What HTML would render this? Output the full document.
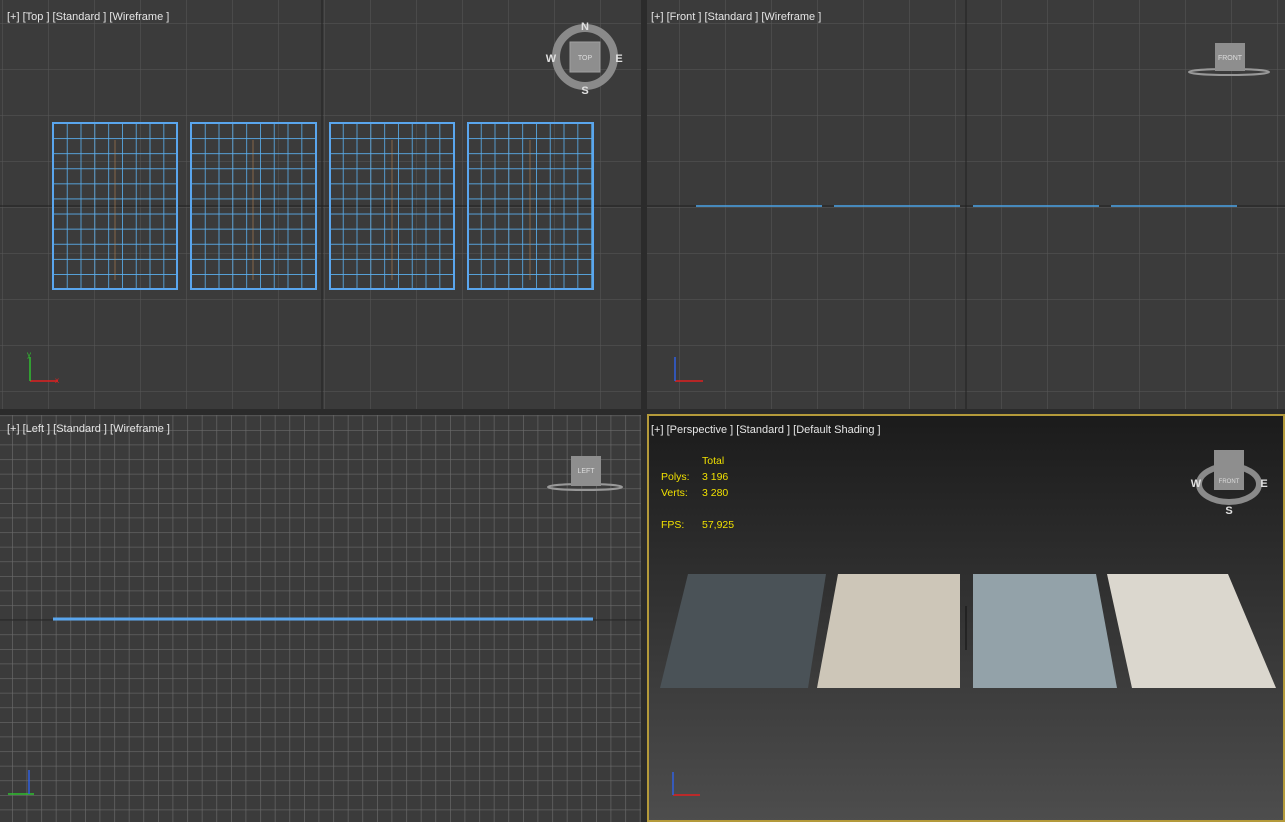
<!DOCTYPE html>
<html><head><meta charset="utf-8"><style>
html,body{margin:0;padding:0;width:1285px;height:822px;overflow:hidden;background:#2b2b2b}
svg{display:block}
text{font-family:"Liberation Sans",sans-serif}
</style></head><body>
<svg width="1285" height="822" viewBox="0 0 1285 822" xmlns="http://www.w3.org/2000/svg">
<defs>
<pattern id="g46" x="2" y="23" width="46" height="46" patternUnits="userSpaceOnUse">
<path d="M0 0H46M0 0V46" stroke="#585858" stroke-width="1" fill="none"/></pattern>
<pattern id="g46b" x="-11" y="23" width="46" height="46" patternUnits="userSpaceOnUse">
<path d="M0 0H46M0 0V46" stroke="#585858" stroke-width="1" fill="none"/></pattern>
<pattern id="g14" x="12" y="430" width="14.6" height="14.6" patternUnits="userSpaceOnUse">
<path d="M0 0H14.6M0 0V14.6" stroke="#6a6a6a" stroke-width="1.3" fill="none"/></pattern>
<pattern id="rug" x="53" y="123" width="13.8" height="15.1" patternUnits="userSpaceOnUse">
<path d="M0 0H13.8M0 0V15.1" stroke="#5ab0f0" stroke-width="1.6" fill="none"/></pattern>
<linearGradient id="pg" x1="0" y1="0" x2="0" y2="1">
<stop offset="0" stop-color="#1b1b1b"/><stop offset="1" stop-color="#4d4d4d"/></linearGradient>
</defs>
<rect x="0" y="0" width="641" height="409" fill="#3b3b3b"/>
<rect x="0" y="0" width="641" height="409" fill="url(#g46)"/>
<line x1="0" y1="206" x2="641" y2="206" stroke="#202020"/>
<line x1="322" y1="0" x2="322" y2="409" stroke="#202020"/>
<g>
<rect x="53" y="123" width="124" height="166" fill="url(#rug)"/>
<rect x="191" y="123" width="125" height="166" fill="url(#rug)"/>
<rect x="330" y="123" width="124" height="166" fill="url(#rug)"/>
<rect x="468" y="123" width="125" height="166" fill="url(#rug)"/>
<g fill="none" stroke="#5aa6ee" stroke-width="2">
<rect x="53" y="123" width="124" height="166"/><rect x="191" y="123" width="125" height="166"/>
<rect x="330" y="123" width="124" height="166"/><rect x="468" y="123" width="125" height="166"/></g>
<g stroke="#b7844f" stroke-width="1" opacity=".6">
<line x1="115" y1="140" x2="115" y2="280"/><line x1="253" y1="140" x2="253" y2="280"/>
<line x1="392" y1="140" x2="392" y2="280"/><line x1="530" y1="140" x2="530" y2="280"/></g>
</g>
<text x="7" y="20" font-size="11" fill="#e6e6e6">[+] [Top ] [Standard ] [Wireframe ]</text>
<circle cx="585" cy="57" r="29" fill="none" stroke="#8a8a8a" stroke-width="8"/>
<rect x="570" y="42" width="30" height="30" fill="#8e8e8e" stroke="#a0a0a0"/>
<text x="585" y="60" font-size="7" fill="#dcdcdc" text-anchor="middle">TOP</text>
<g font-size="11" font-weight="bold" fill="#e0e0e0" text-anchor="middle">
<text x="585" y="30">N</text><text x="585" y="94">S</text><text x="551" y="62">W</text><text x="619" y="62">E</text></g>
<g stroke-width="1.5"><line x1="30" y1="381" x2="58" y2="381" stroke="#e02020"/><line x1="30" y1="381" x2="30" y2="357" stroke="#30c030"/></g>
<text x="27" y="357" font-size="8" fill="#30c030">y</text><text x="55" y="383" font-size="8" fill="#e02020">x</text>
<rect x="647" y="0" width="638" height="409" fill="#3b3b3b"/>
<rect x="647" y="0" width="638" height="409" fill="url(#g46b)"/>
<line x1="647" y1="206" x2="1285" y2="206" stroke="#202020"/>
<line x1="966" y1="0" x2="966" y2="409" stroke="#202020"/>
<g stroke="#4aa3e8" stroke-width="1.5"><line x1="696" y1="206" x2="822" y2="206"/><line x1="834" y1="206" x2="960" y2="206"/><line x1="973" y1="206" x2="1099" y2="206"/><line x1="1111" y1="206" x2="1237" y2="206"/></g>
<text x="651" y="20" font-size="11" fill="#e6e6e6">[+] [Front ] [Standard ] [Wireframe ]</text>
<ellipse cx="1229" cy="72" rx="40" ry="3" fill="none" stroke="#999" stroke-width="2"/>
<rect x="1215" y="43" width="30" height="28" fill="#8e8e8e"/>
<text x="1230" y="60" font-size="7" fill="#ddd" text-anchor="middle">FRONT</text>
<g stroke-width="1.5"><line x1="675" y1="381" x2="703" y2="381" stroke="#e02020"/><line x1="675" y1="381" x2="675" y2="357" stroke="#3060e0"/></g>
<rect x="0" y="415" width="641" height="407" fill="#3b3b3b"/>
<rect x="0" y="415" width="641" height="407" fill="url(#g14)"/>
<line x1="0" y1="620" x2="641" y2="620" stroke="#202020"/>
<line x1="53" y1="619" x2="593" y2="619" stroke="#5aa6ee" stroke-width="3"/>
<text x="7" y="432" font-size="11" fill="#e6e6e6">[+] [Left ] [Standard ] [Wireframe ]</text>
<ellipse cx="585" cy="487" rx="37" ry="3" fill="none" stroke="#999" stroke-width="2"/>
<rect x="571" y="456" width="30" height="30" fill="#8e8e8e"/>
<text x="586" y="473" font-size="7" fill="#ddd" text-anchor="middle">LEFT</text>
<g stroke-width="1.5"><line x1="8" y1="794" x2="34" y2="794" stroke="#30c030"/><line x1="29" y1="794" x2="29" y2="770" stroke="#3060e0"/></g>
<rect x="648" y="415" width="636" height="406" fill="url(#pg)" stroke="#b49a3a" stroke-width="2"/>
<text x="651" y="433" font-size="11" fill="#e6e6e6">[+] [Perspective ] [Standard ] [Default Shading ]</text>
<g font-size="10.5" fill="#f0e000">
<text x="702" y="464">Total</text>
<text x="661" y="480">Polys:</text><text x="702" y="480">3 196</text>
<text x="661" y="496">Verts:</text><text x="702" y="496">3 280</text>
<text x="661" y="528">FPS:</text><text x="702" y="528">57,925</text></g>
<polygon points="688,574 826,574 808,688 660,688" fill="#4a5257"/>
<polygon points="838,574 960,574 960,688 817,688" fill="#cdc6b8"/>
<polygon points="973,574 1096,574 1117,688 973,688" fill="#93a2a9"/>
<polygon points="1107,574 1228,574 1276,688 1132,688" fill="#dbd7ce"/>
<line x1="966" y1="606" x2="966" y2="650" stroke="#111"/>
<ellipse cx="1229" cy="484" rx="30" ry="18" fill="none" stroke="#8a8a8a" stroke-width="6"/>
<rect x="1214" y="450" width="30" height="40" fill="#8e8e8e"/>
<text x="1229" y="483" font-size="6" fill="#ddd" text-anchor="middle">FRONT</text>
<g font-size="11" font-weight="bold" fill="#e0e0e0" text-anchor="middle">
<text x="1229" y="514">S</text><text x="1196" y="487">W</text><text x="1264" y="487">E</text></g>
<g stroke-width="1.5"><line x1="673" y1="795" x2="700" y2="795" stroke="#e02020"/><line x1="673" y1="795" x2="673" y2="772" stroke="#3060e0"/></g>
</svg>
</body></html>
